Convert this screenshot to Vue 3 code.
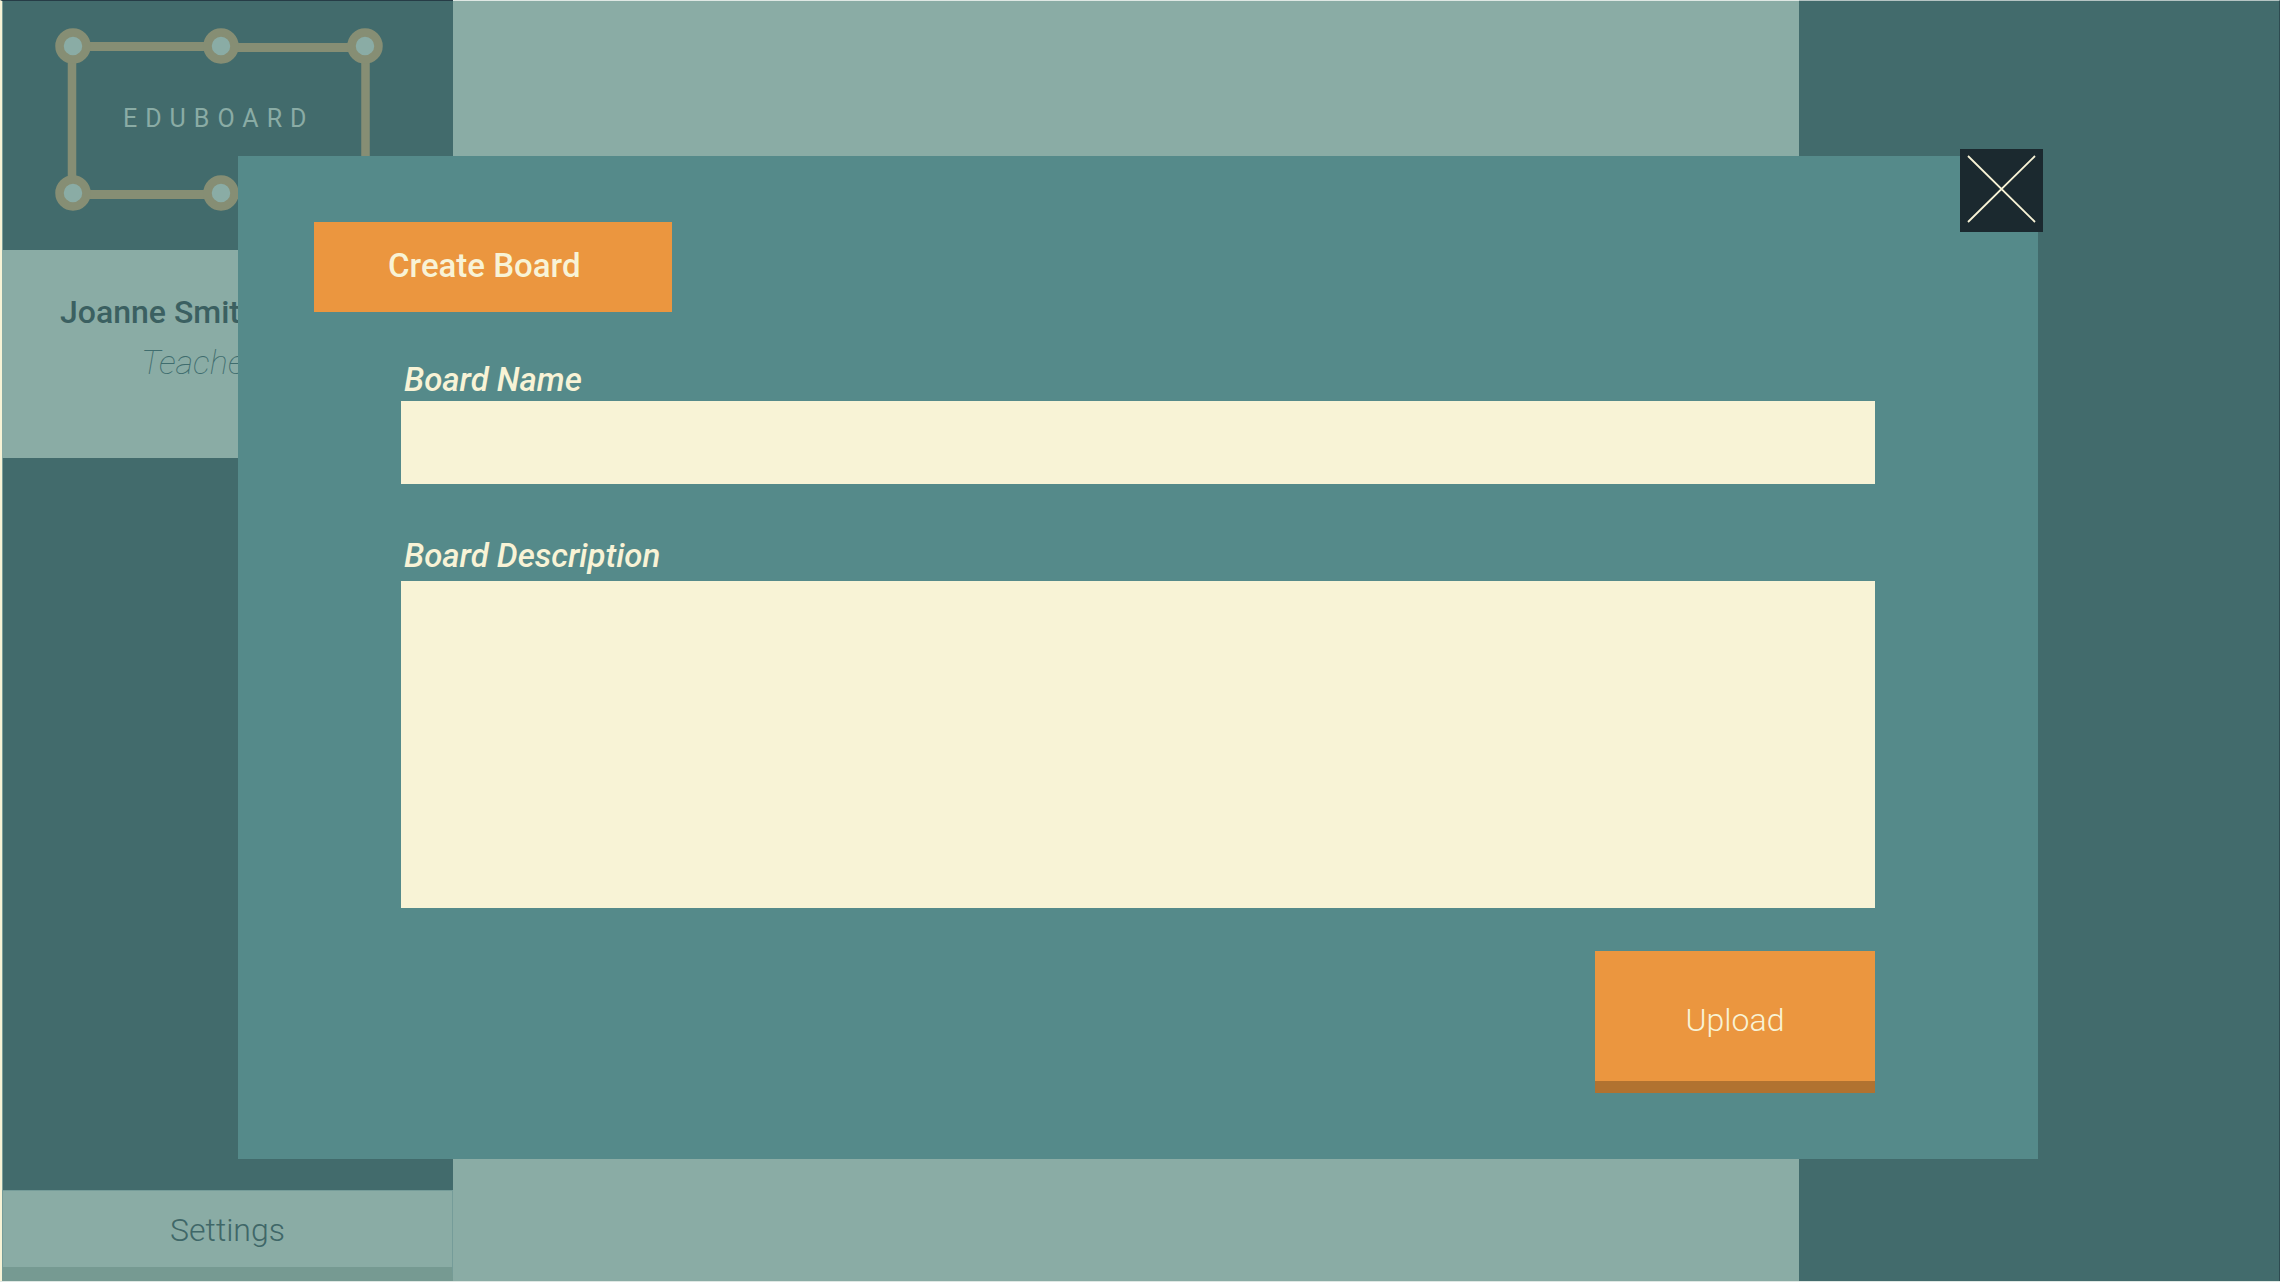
<script setup>
import { ref } from 'vue'

const open = ref(true)
const boardName = ref('')
const boardDescription = ref('')

const nodes = [
  [36, 18], [184, 18], [328, 18],
  [36, 165], [184, 165], [328, 165],
]
</script>

<template>
  <div class="page">
    <aside class="sidebar">
      <header class="brand">
        <svg class="frame" viewBox="0 0 346 183" aria-hidden="true">
          <g fill="none" stroke="#868e74" stroke-width="9">
            <path d="M36 18.500H184M184 19.500H328M36 166.500H184M184 166.500H328" />
            <path d="M35 18V165M328.500 18V165" stroke-width="8.500" />
          </g>
          <circle
            v-for="([x, y], i) in nodes"
            :key="i"
            :cx="x"
            :cy="y"
            r="13.500"
            fill="#8aaca5"
            stroke="#868e74"
            stroke-width="8.500"
          />
        </svg>
        <span class="brand-name">EDUBOARD</span>
      </header>
      <section class="profile">
        <p class="name">Joanne Smith</p>
        <p class="role">Teacher</p>
      </section>
      <button type="button" class="settings">Settings</button>
    </aside>
    <main class="content"></main>
    <aside class="panel"></aside>

    <div v-if="open" class="overlay">
      <form class="modal" role="dialog" aria-labelledby="modal-title" @submit.prevent>
        <button type="button" class="close" aria-label="Close" @click="open = false">
          <svg viewBox="0 0 83 83" aria-hidden="true">
            <path d="M8 7L75 73M75 7L8 73" fill="none" stroke="#f8f3d6" stroke-width="1.800" />
          </svg>
        </button>
        <h1 id="modal-title" class="title">Create Board</h1>
        <div class="fields">
          <label for="board-name">Board Name</label>
          <input id="board-name" v-model="boardName" type="text" />
          <label for="board-description">Board Description</label>
          <textarea id="board-description" v-model="boardDescription"></textarea>
          <button type="submit" class="upload">Upload</button>
        </div>
      </form>
    </div>
  </div>
</template>

<style>
body {
  margin: 0;
  background: #dfe8e4;
}
</style>

<style scoped>
.page {
  position: relative;
  display: flex;
  box-sizing: border-box;
  min-height: 100vh;
  padding-bottom: 1px;
  font-family: Roboto, "Liberation Sans", sans-serif;
}

button,
input,
textarea {
  box-sizing: border-box;
  margin: 0;
  border: 0;
  border-radius: 0;
  font-family: inherit;
}

.sidebar {
  display: flex;
  flex-direction: column;
  flex: none;
  box-sizing: border-box;
  width: 453px;
  border-left: 2px solid #f8f3d6;
  border-top: 1px solid #263c46;
  background: #426b6c;
  box-shadow: inset 1px 0 #7d9f99;
}

.brand {
  display: grid;
  flex: none;
  height: 249px;
  padding: 27px 0 0 35px;
  box-sizing: border-box;
}

.frame {
  grid-area: 1 / 1;
  width: 346px;
  height: 183px;
  overflow: visible;
}

.brand-name {
  grid-area: 1 / 1;
  padding: 76px 0 0 86px;
  color: #8aaca5;
  font-size: 25px;
  line-height: 30px;
  letter-spacing: 8px;
}

.profile {
  flex: none;
  box-sizing: border-box;
  height: 208px;
  padding: 42px 58px 0;
  background: #8aaca5;
  white-space: nowrap;
}

.profile p {
  margin: 0;
}

.name {
  color: #3b6061;
  font-size: 32px;
  font-weight: 500;
  line-height: 40px;
}

.role {
  padding: 10px 0 0 81px;
  color: #3f6d6e;
  font-size: 34px;
  font-style: italic;
  font-weight: 100;
  line-height: 40px;
}

.settings {
  height: 91px;
  margin-top: auto;
  padding: 2px 0 0;
  border: 1px solid #759c99;
  border-bottom: 14px solid #769a92;
  background: #8aaca5;
  color: #3f6768;
  font-size: 32px;
  font-weight: 300;
}

.content {
  flex: 1;
  border-top: 1px solid #dfe8e4;
  background: #8aaca5;
}

.panel {
  flex: none;
  box-sizing: border-box;
  width: 481px;
  border-top: 1px solid #b5c4c3;
  border-right: 1px solid #2e4a50;
  background: #426b6c;
}

.overlay {
  position: absolute;
  inset: 0;
  padding: 156px 242px 122px 238px;
}

.modal {
  position: relative;
  box-sizing: border-box;
  padding: 66px 163px 66px 76px;
  background: #558a8a;
  color: #f8f3d6;
}

.close {
  position: absolute;
  top: -7px;
  right: -5px;
  width: 83px;
  height: 83px;
  padding: 0;
  background: #1b292f;
}

.close svg {
  display: block;
  width: 83px;
  height: 83px;
}

.title {
  box-sizing: border-box;
  width: 358px;
  margin: 0;
  padding: 0 0 2px 74px;
  background: #eb963f;
  font-size: 33px;
  font-weight: 500;
  line-height: 88px;
}

.fields {
  display: flex;
  flex-direction: column;
  padding: 48px 0 0 87px;
}

label {
  padding: 0 0 1px 3px;
  font-size: 33px;
  font-style: italic;
  font-weight: 500;
  line-height: 40px;
}

input {
  height: 83px;
  padding: 0 16px;
  background: #f8f3d6;
  color: #3b6061;
  font-size: 33px;
}

input + label {
  padding: 52px 0 5px 3px;
}

textarea {
  height: 327px;
  padding: 16px;
  resize: none;
  background: #f8f3d6;
  color: #3b6061;
  font-size: 33px;
}

.upload {
  align-self: flex-end;
  width: 280px;
  height: 142px;
  margin-top: 43px;
  padding: 8px 0 0;
  border-bottom: 12px solid #b17230;
  background: #eb963f;
  color: #f8f3d6;
  font-size: 32px;
  font-weight: 300;
}
</style>
